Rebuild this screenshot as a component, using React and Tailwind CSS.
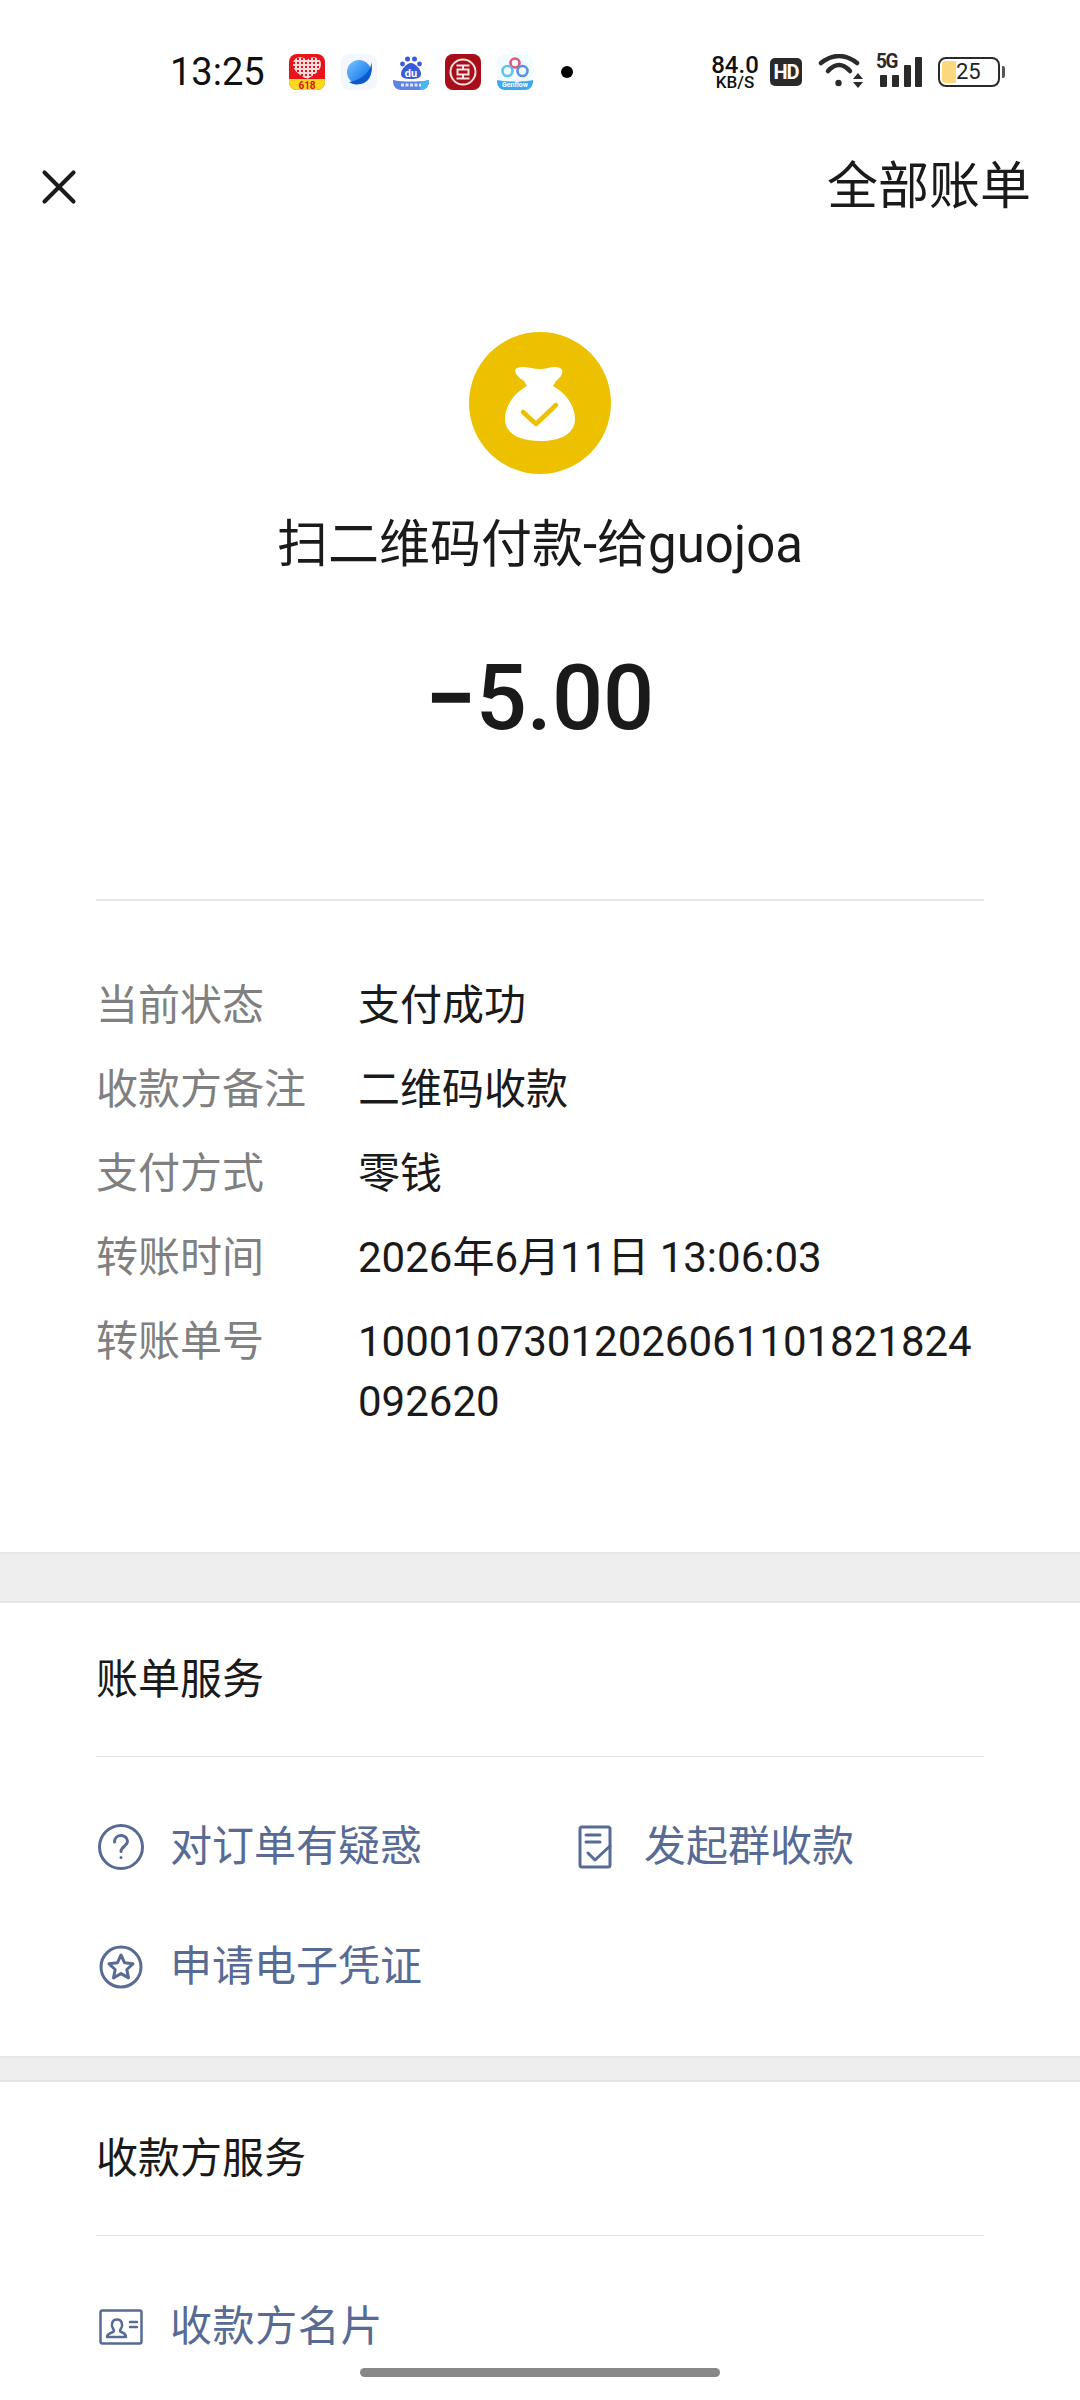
import { X } from "lucide-react";

const FONT = "font-['Roboto','Noto_Sans_CJK_SC',sans-serif]";

const detalles = [
  ["当前状态", "支付成功"],
  ["收款方备注", "二维码收款"],
  ["支付方式", "零钱"],
  ["转账时间", "2026年6月11日 13:06:03"],
  ["转账单号", "10001073012026061101821824092620"],
];

function AppIcons() {
  return (
    <div className="flex items-center gap-[16px] ml-[24px]">
      {/* pinduoduo */}
      <svg width="36" height="36" viewBox="0 0 36 36">
        <defs>
          <pattern id="qr" width="4" height="4" patternUnits="userSpaceOnUse">
            <rect width="4" height="4" fill="#f9dcdc" />
            <rect x="0" y="0" width="2" height="2" fill="#e8141c" />
          </pattern>
        </defs>
        <rect width="36" height="36" rx="8" fill="#e8141c" />
        <path d="M0 25h36v3a8 8 0 0 1-8 8H8a8 8 0 0 1-8-8z" fill="#fcd91c" />
        <path d="M18 25C9 20 4 16 4 10 4 3 13 1 18 6c5-5 14-3 14 4 0 6-5 10-14 15z" fill="url(#qr)" />
        <text x="18" y="34.500" textAnchor="middle" fontSize="10" fontWeight="700" fill="#d8141c" fontFamily="Roboto">618</text>
      </svg>
      {/* browser planet */}
      <svg width="36" height="36" viewBox="0 0 36 36">
        <defs>
          <linearGradient id="planeta" x1="0" y1="0" x2="1" y2="1">
            <stop offset="0" stopColor="#7cc4fb" />
            <stop offset="0.6" stopColor="#2f8df2" />
            <stop offset="1" stopColor="#0f5fd6" />
          </linearGradient>
        </defs>
        <rect width="36" height="36" rx="8" fill="#f3f6fa" />
        <circle cx="18" cy="18" r="12" fill="url(#planeta)" />
        <path d="M30 8c1 8-8 18-22 20 5 4 13 3 18-2s6-12 4-18z" fill="#0f58cc" />
      </svg>
      {/* baidu */}
      <svg width="36" height="36" viewBox="0 0 36 36">
        <rect width="36" height="36" rx="8" fill="#ffffff" />
        <circle cx="9.500" cy="10" r="2.400" fill="#3a5bd9" />
        <circle cx="14.500" cy="5" r="2.500" fill="#3a5bd9" />
        <circle cx="21.500" cy="5" r="2.500" fill="#3a5bd9" />
        <circle cx="26.500" cy="10" r="2.400" fill="#3a5bd9" />
        <path d="M18 9c4 0 10 6 10 11 0 4-4 5-10 5S8 24 8 20c0-5 6-11 10-11z" fill="#3a5bd9" />
        <text x="18" y="22.500" textAnchor="middle" fontSize="11" fontWeight="700" fill="#fff" fontFamily="Roboto">du</text>
        <path d="M0 26c8 2 28 2 36 0v2a8 8 0 0 1-8 8H8a8 8 0 0 1-8-8z" fill="#5f83e6" />
        <path d="M27 36a8 8 0 0 0 9-8v-2c-3 1-6 1-8 1z" fill="#49b6f0" />
        <path d="M8 31h20" stroke="#dfe8fb" strokeWidth="3" strokeDasharray="3 1.500" />
      </svg>
      {/* bank */}
      <svg width="36" height="36" viewBox="0 0 36 36">
        <rect width="36" height="36" rx="8" fill="#a80d18" />
        <circle cx="18" cy="18" r="12.500" fill="none" stroke="#f8e4e4" strokeWidth="2" />
        <path d="M11.500 11.500h13M18 11.500v4M12.500 15.500h11v5h-11zM18 20.500v4M11.500 24.500h13" fill="none" stroke="#f8e4e4" strokeWidth="2" />
      </svg>
      {/* genflow */}
      <svg width="36" height="36" viewBox="0 0 36 36">
        <rect width="36" height="36" rx="8" fill="#f2fbfe" />
        <circle cx="18" cy="9" r="4.500" fill="none" stroke="#e2557a" strokeWidth="2.600" />
        <circle cx="10.500" cy="17" r="5" fill="none" stroke="#5cc4ee" strokeWidth="2.600" />
        <circle cx="25.500" cy="17" r="5" fill="none" stroke="#5b8fe8" strokeWidth="2.600" />
        <path d="M0 26c8 2 28 2 36 0v2a8 8 0 0 1-8 8H8a8 8 0 0 1-8-8z" fill="#3ba8f0" />
        <text x="18" y="33" textAnchor="middle" fontSize="7" fontWeight="700" fill="#fff" fontFamily="Roboto">Genflow</text>
      </svg>
      <div className="w-[12px] h-[12px] rounded-full bg-black ml-[12px]" />
    </div>
  );
}

function StatusRight() {
  return (
    <div className="flex items-center">
      <div className="w-[50px] flex flex-col items-center text-[#111] mr-[10px]">
        <span className="text-[24px] leading-[20px] font-medium">84.0</span>
        <span className="text-[17px] leading-[15px] font-medium">KB/S</span>
      </div>
      <div className="w-[32px] h-[28px] rounded-[5px] bg-[#2a2a2a] text-white text-[20px] leading-[28px] font-bold text-center tracking-[-1px]">
        HD
      </div>
      <svg className="ml-[16px]" width="46" height="36" viewBox="0 0 46 36">
        <path d="M3 9Q21-5 39 9" fill="none" stroke="#2a2a2a" strokeWidth="4.500" strokeLinecap="round" />
        <path d="M10 17Q21 5 32 17" fill="none" stroke="#2a2a2a" strokeWidth="4.500" strokeLinecap="round" />
        <circle cx="20.500" cy="29" r="3.200" fill="#2a2a2a" />
        <path d="M35 25l5-6 5 6zM35 28h10l-5 6z" fill="#2a2a2a" />
      </svg>
      <div className="relative w-[46px] h-[32px] ml-[12px]">
        <span className="absolute left-0 top-[-3px] text-[21px] leading-[17px] font-bold text-[#2a2a2a] tracking-[-1.500px] scale-x-90 origin-left">5G</span>
        <svg className="absolute inset-0" width="46" height="32" viewBox="0 0 46 32">
          <rect x="4" y="19" width="7" height="12" rx="1" fill="#2a2a2a" />
          <rect x="16" y="19" width="7" height="12" rx="1" fill="#2a2a2a" />
          <rect x="28" y="9" width="7" height="22" rx="1" fill="#2a2a2a" />
          <rect x="39" y="1" width="7" height="30" rx="1" fill="#2a2a2a" />
        </svg>
      </div>
      <div className="relative w-[62px] h-[30px] ml-[16px] rounded-[8px] border-2 border-[#2a2a2a] overflow-hidden">
        <div className="absolute left-[2px] top-[2px] bottom-[2px] w-[14px] bg-[#fbd77e] rounded-l-[3px]" />
        <span className="absolute left-[16px] top-0 text-[22px] leading-[26px] text-[#222]">25</span>
      </div>
      <div className="w-[3px] h-[12px] bg-[#555] rounded-r-[2px] ml-[2px]" />
    </div>
  );
}

function BagIcon() {
  return (
    <div className="w-[142px] h-[142px] rounded-full bg-[#edc100] flex items-center justify-center">
      <svg width="72" height="80" viewBox="0 0 72 80">
        <path
          d="M13 5c7-3 14 1 23 1 8 0 14-4 20-1 4 2 3 8-4 13l-3 5c13 7 22 20 22 33 0 15-15 22-35 22S1 71 1 56c0-13 9-26 22-33l-3-5C14 14 8 8 13 5z"
          fill="#fff"
        />
        <path d="M19 49l13 12 20-19" fill="none" stroke="#edc100" strokeWidth="4.500" strokeLinecap="round" strokeLinejoin="round" />
      </svg>
    </div>
  );
}

function SectionTitle({ children }) {
  return (
    <div className="mx-[96px] h-[154px] flex items-center border-b border-[#e4e4e4] text-[42px] text-[#1a1a1a]">
      {children}
    </div>
  );
}

function ServiceLink({ icon, label, labelClass = "text-[42px]" }) {
  return (
    <div className="flex items-center">
      <div className="w-[50px] h-[50px] flex items-center justify-center mr-[24px]">{icon}</div>
      <span className={`${labelClass} leading-[56px] text-[#576b95]`}>{label}</span>
    </div>
  );
}

export default function App() {
  return (
    <div className={`relative w-[1080px] h-[2400px] overflow-hidden bg-white ${FONT}`}>
      {/* BARRA DE ESTADO */}
      <div className="h-[144px] flex items-center justify-between pl-[170px] pr-[75px]">
        <div className="flex items-center">
          <span className="text-[38px] text-[#111]">13:25</span>
          <AppIcons />
        </div>
        <StatusRight />
      </div>

      {/* HEADER */}
      <div className="h-[86px] flex items-center justify-between pl-[30px] pr-[49px]">
        <X size={58} strokeWidth={1.7} color="#1a1a1a" />
        <span className="text-[51px] text-[#1a1a1a]">全部账单</span>
      </div>

      {/* RESUMEN */}
      <div className="flex flex-col items-center pt-[102px]">
        <BagIcon />
        <p className="mt-[36px] text-[51px] leading-[70px] text-[#1a1a1a]">扫二维码付款-给guojoa</p>
        <p className="mt-[64px] text-[90px] leading-[110px] font-medium text-[#1a1a1a]">
          <span className="font-bold">−</span>5.00
        </p>
      </div>

      <div className="mx-[96px] mt-[145px] border-t-2 border-[#e8e8e8]" />

      {/* DETALLES */}
      <div className="pt-[75px] px-[96px] h-[651px]">
        {detalles.map(([label, valor]) => (
          <div key={label} className="flex text-[42px] leading-[60px] mb-[24px]">
            <span className="w-[262px] shrink-0 text-[#808080]">{label}</span>
            <span className="text-[#1a1a1a] break-all">{valor}</span>
          </div>
        ))}
      </div>

      <div className="h-[51px] bg-[#eeeeee] border-y-2 border-[#e6e6e6]" />

      {/* SERVICIOS */}
      <SectionTitle>账单服务</SectionTitle>
      <div className="px-[96px] pt-[62px] h-[299px]">
        <div className="grid grid-cols-[474px_1fr] gap-y-[64px]">
          <ServiceLink
            label="对订单有疑惑"
            icon={
              <svg width="48" height="48" viewBox="0 0 48 48" fill="none" stroke="#576b95" strokeWidth="3" strokeLinecap="round">
                <circle cx="24" cy="24" r="21.500" />
                <path d="M17.500 19c0-4 3-6.500 6.500-6.500s6.500 2.500 6.500 6c0 4.500-6.500 5-6.500 10" />
                <circle cx="24" cy="34.500" r="1.500" fill="#576b95" stroke="none" />
              </svg>
            }
          />
          <ServiceLink
            label="发起群收款"
            icon={
              <svg width="34" height="44" viewBox="0 0 34 44" fill="none" stroke="#576b95" strokeWidth="3" strokeLinejoin="round" strokeLinecap="round">
                <rect x="2" y="2" width="30" height="40" rx="2" />
                <path d="M8 10h14M8 17h14M10 28l7 7 15-14" />
              </svg>
            }
          />
          <ServiceLink
            label="申请电子凭证"
            icon={
              <svg width="44" height="44" viewBox="0 0 44 44" fill="none" stroke="#576b95" strokeWidth="3" strokeLinejoin="round">
                <circle cx="22" cy="22" r="20" />
                <path d="M22 10l3.600 7.800 8.400 1-6.200 5.700 1.700 8.400-7.500-4.300-7.500 4.300 1.700-8.400-6.200-5.700 8.400-1z" />
              </svg>
            }
          />
        </div>
      </div>

      <div className="h-[26px] bg-[#eeeeee] border-y-2 border-[#e6e6e6]" />

      <SectionTitle>收款方服务</SectionTitle>
      <div className="px-[96px] pt-[63px]">
        <ServiceLink
          label="收款方名片"
          labelClass="text-[42px] tracking-[0.6px]"
          icon={
            <svg width="44" height="36" viewBox="0 0 44 36" fill="none" stroke="#576b95" strokeWidth="2.500" strokeLinejoin="round" strokeLinecap="round">
              <rect x="1.500" y="1.500" width="41" height="33" rx="2" />
              <path d="M8 28c0-3 3-4 6-5 1.500-.5 1-2 0-3.500-2-3-1.500-9 4-9s6 6 4 9c-1 1.500-1.500 3 0 3.500 3 1 5 2 5 5z" />
              <path d="M31 13h7M31 18h7" />
            </svg>
          }
        />
      </div>

      {/* BARRA DE GESTOS */}
      <div className="absolute left-[360px] top-[2368px] w-[360px] h-[9px] rounded-full bg-[#888888]" />
    </div>
  );
}
